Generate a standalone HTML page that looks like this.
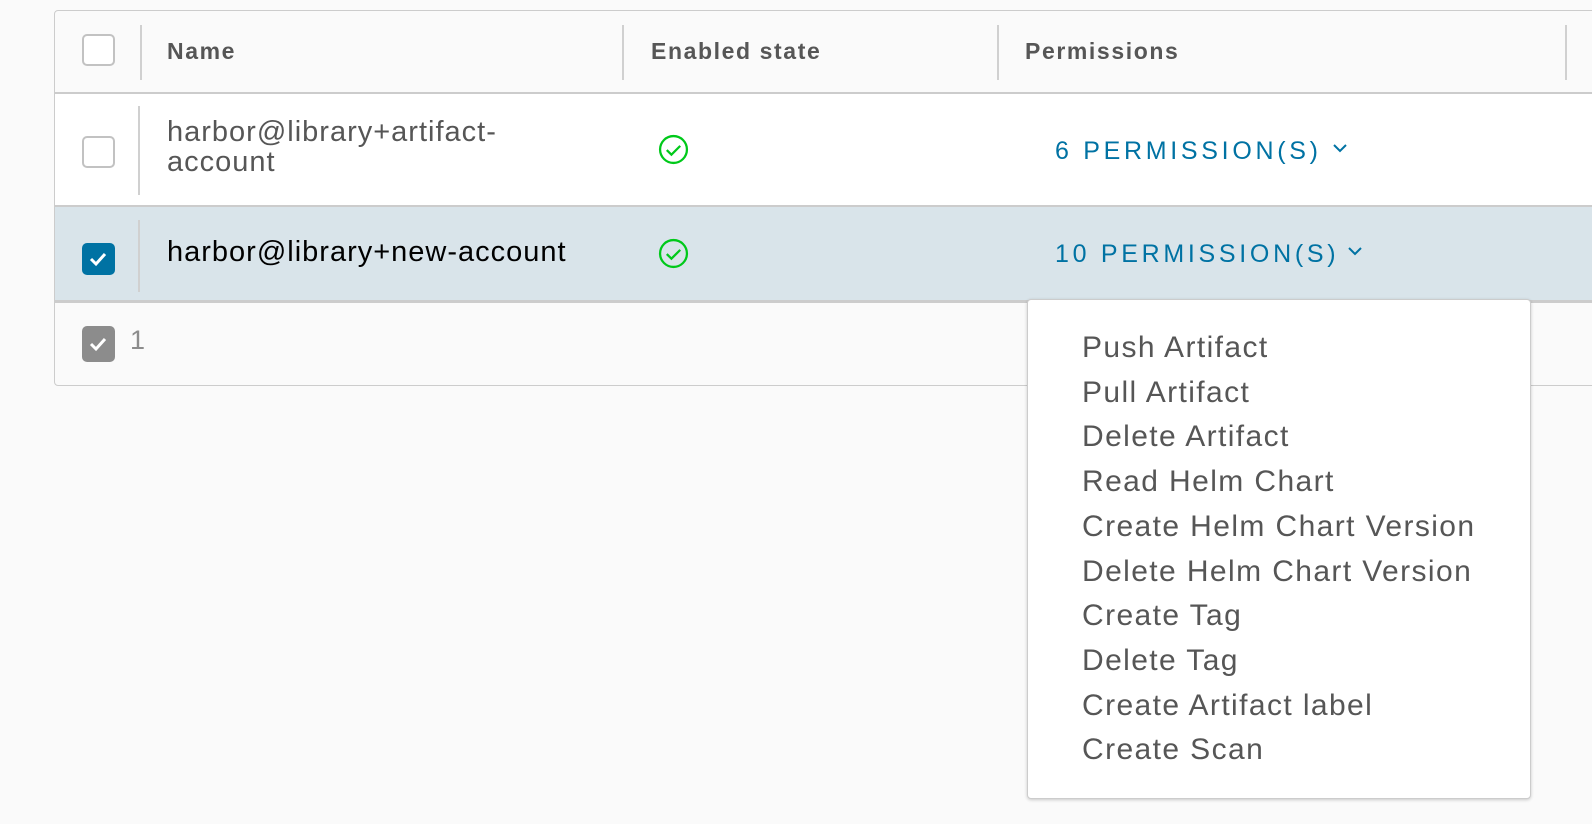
<!DOCTYPE html>
<html><head><meta charset="utf-8"><style>
body{margin:0;width:1592px;height:824px;background:#fafafa;font-family:"Liberation Sans",sans-serif;position:relative;overflow:hidden}
.a{position:absolute;white-space:nowrap}
.tbl{left:54px;top:10px;width:1545px;height:374px;border:1px solid #ccc;border-radius:4px;background:#fafafa}
.cb{position:absolute;width:33px;height:32px;border:2px solid #c2c2c2;border-radius:5px;box-sizing:border-box;background:#fff}
.vl{position:absolute;width:2px;background:#d0d0d0}
.hd{font-weight:bold;font-size:23px;color:#565656;letter-spacing:1.6px}
.perm{color:#0072a3;font-size:25px;letter-spacing:3.7px}
.dd{font-size:30px;color:#565656;line-height:44.7px;letter-spacing:1.4px}
</style></head><body>
<div class="a tbl"></div>
<!-- header -->
<div class="cb" style="left:82px;top:34px"></div>
<div class="vl" style="left:140px;top:25px;height:55px"></div>
<div class="a hd" style="left:167px;top:38px">Name</div>
<div class="vl" style="left:622px;top:25px;height:55px"></div>
<div class="a hd" style="left:651px;top:38px">Enabled state</div>
<div class="vl" style="left:997px;top:25px;height:55px"></div>
<div class="a hd" style="left:1025px;top:38px">Permissions</div>
<div class="vl" style="left:1565px;top:25px;height:55px"></div>
<!-- row1 -->
<div class="a" style="left:55px;top:92px;width:1540px;height:2px;background:#ccc"></div>
<div class="a" style="left:55px;top:94px;width:1540px;height:111px;background:#fff"></div>
<div class="cb" style="left:82px;top:136px"></div>
<div class="vl" style="left:138px;top:106px;height:89px"></div>
<div class="a" style="left:167px;top:117px;font-size:29px;letter-spacing:1px;color:#565656;line-height:30px">harbor@library+artifact-<br>account</div>
<svg class="a" style="left:658px;top:134px" width="31" height="31" viewBox="0 0 30 30"><circle cx="15" cy="15" r="13" fill="none" stroke="#00c91a" stroke-width="2.2"/><path d="M8.5 15.5l4.5 4.5 8.5-8.5" fill="none" stroke="#00c91a" stroke-width="2.2"/></svg>
<div class="a perm" style="left:1055px;top:137px">6 PERMISSION(S)</div>
<svg class="a" style="left:1332px;top:142px" width="16" height="12"><path d="M2 3l6 6 6-6" fill="none" stroke="#0072a3" stroke-width="2"/></svg>
<!-- row2 -->
<div class="a" style="left:55px;top:205px;width:1540px;height:2px;background:#ccc"></div>
<div class="a" style="left:55px;top:207px;width:1540px;height:93px;background:#d9e4ea"></div>
<div class="a" style="left:82px;top:243px;width:33px;height:32px;border-radius:5px;background:#0072a3"></div>
<svg class="a" style="left:82px;top:243px" width="33" height="32"><path d="M9 16l5 5 9-10" fill="none" stroke="#fff" stroke-width="3"/></svg>
<div class="vl" style="left:138px;top:220px;height:72px"></div>
<div class="a" style="left:167px;top:236px;font-size:29px;letter-spacing:1px;color:#000">harbor@library+new-account</div>
<svg class="a" style="left:658px;top:238px" width="31" height="31" viewBox="0 0 30 30"><circle cx="15" cy="15" r="13" fill="none" stroke="#00c91a" stroke-width="2.2"/><path d="M8.5 15.5l4.5 4.5 8.5-8.5" fill="none" stroke="#00c91a" stroke-width="2.2"/></svg>
<div class="a perm" style="left:1055px;top:240px">10 PERMISSION(S)</div>
<svg class="a" style="left:1347px;top:245px" width="16" height="12"><path d="M2 3l6 6 6-6" fill="none" stroke="#0072a3" stroke-width="2"/></svg>
<div class="a" style="left:55px;top:300px;width:1540px;height:3px;background:#ccc"></div>
<!-- footer -->
<div class="a" style="left:82px;top:326px;width:33px;height:36px;border-radius:5px;background:#8c8c8c"></div>
<svg class="a" style="left:82px;top:326px" width="33" height="36"><path d="M9 18l5 5 9-10" fill="none" stroke="#fff" stroke-width="3"/></svg>
<div class="a" style="left:130px;top:325px;font-size:27px;color:#8c8c8c">1</div>
<!-- dropdown -->
<div class="a" style="left:1027px;top:299px;width:504px;height:500px;background:#fff;border:1px solid #ccc;border-radius:4px;box-sizing:border-box;box-shadow:0 1px 3px rgba(0,0,0,0.2)"></div>
<div class="a dd" style="left:1082px;top:326px">Push Artifact<br>Pull Artifact<br>Delete Artifact<br>Read Helm Chart<br>Create Helm Chart Version<br>Delete Helm Chart Version<br>Create Tag<br>Delete Tag<br>Create Artifact label<br>Create Scan</div>
</body></html>
